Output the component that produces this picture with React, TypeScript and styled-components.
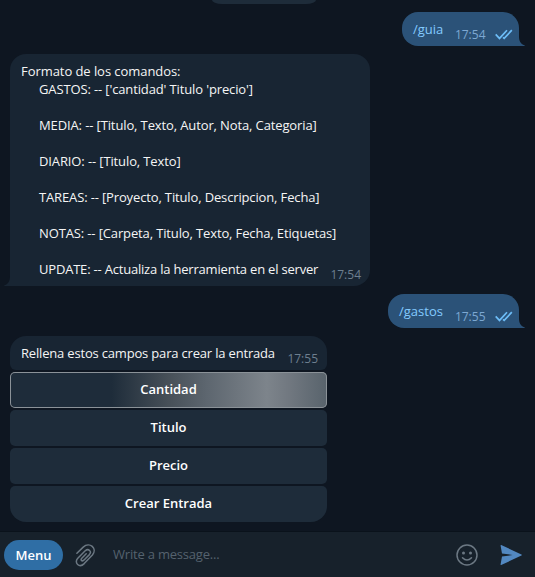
import React from "react";
import styled, { createGlobalStyle, css } from "styled-components";

const GlobalStyle = createGlobalStyle`
  * { box-sizing: border-box; }
  body {
    margin: 0;
    background: #0e1621;
    font-family: "Open Sans", "Noto Sans", sans-serif;
    font-size: 13px;
    line-height: 18px;
    overflow: hidden;
  }
`;

const Window = styled.div`
  width: 535px;
  height: 577px;
  display: flex;
  flex-direction: column;
  background: #0e1621;
`;

const Chat = styled.main`
  flex: 1;
  min-height: 0;
  display: flex;
  flex-direction: column;
  gap: 8px;
  padding: 0 16px 0 10px;
`;

const DatePill = styled.div`
  flex: none;
  width: 104px;
  height: 4px;
  margin-left: 202px;
  border-radius: 0 0 10px 10px / 0 0 4px 4px;
  background: #1e2c3a;
`;

const Bubble = styled.article<{ $out?: boolean; $width: number; $joined?: boolean }>`
  position: relative;
  flex: none;
  align-self: ${(p) => (p.$out ? "flex-end" : "flex-start")};
  display: flex;
  align-items: flex-end;
  justify-content: space-between;
  width: ${(p) => p.$width}px;
  padding: 8px 9px 8px 11px;
  color: #f5f5f5;
  background: #182533;
  border-radius: 16px 16px 16px 0;
  ${(p) =>
    p.$out &&
    css`
      color: #83caff;
      background: #2b5278;
      border-radius: 16px 16px 0 16px;
      padding-right: 6px;
    `}
  ${(p) =>
    p.$joined &&
    css`
      border-radius: 16px 16px 6px 6px;
    `}
`;

const Tail = styled.svg<{ $out?: boolean }>`
  position: absolute;
  bottom: 0;
  width: 6px;
  height: 10px;
  ${(p) =>
    p.$out
      ? css`
          right: -6px;
          fill: #2b5278;
        `
      : css`
          left: -6px;
          fill: #182533;
          transform: scaleX(-1);
        `}
`;

const Text = styled.div`
  white-space: pre;
`;

const Line = styled.div<{ $tracking?: number }>`
  letter-spacing: ${(p) => p.$tracking ?? 0}px;
`;

const Indented = styled.div`
  padding-left: 18px;
  display: grid;
  row-gap: 18px;
`;

const Meta = styled.div<{ $out?: boolean }>`
  flex: none;
  display: flex;
  align-items: center;
  gap: 9.5px;
  height: 18px;
  margin: 0 0 -6px -20px;
  font-size: 12px;
  color: ${(p) => (p.$out ? "#7da8d3" : "#6d7f8f")};
`;

const CheckIcon = styled.svg`
  display: block;
  margin-top: -2px;
  fill: none;
  stroke: #6dbdf7;
  stroke-width: 1.7;
`;

const Keyboard = styled.section`
  flex: none;
  width: 317px;
  margin-top: -6px;
  display: grid;
  grid-auto-rows: 36px;
  row-gap: 2px;
`;

const KeyButton = styled.button<{ $loading?: boolean }>`
  border: 0;
  padding: 0 0 2px;
  border-radius: 5px;
  background: #1e2c3a;
  color: #fff;
  font: 600 13px/18px "Open Sans", "Noto Sans", sans-serif;
  &:last-child {
    border-radius: 5px 5px 16px 16px;
  }
  ${(p) =>
    p.$loading &&
    css`
      box-shadow: inset 0 0 0 1px #8b9298;
      background: linear-gradient(
        90deg,
        #1e2c3a 32%,
        #475058 50%,
        #5d666f 62%,
        #7d848b 81%,
        #717880 88%,
        #58636c 100%
      );
    `}
`;

const Composer = styled.footer`
  flex: none;
  height: 46px;
  border-top: 1px solid #0a121b;
  background: #17212b;
  display: flex;
  align-items: center;
  padding: 0 12px 0 4px;
`;

const MenuButton = styled.button`
  width: 59px;
  height: 30px;
  margin-top: 1px;
  padding: 0;
  border: 0;
  border-radius: 15px;
  background: #2f6ea5;
  color: #fff;
  font: 600 13px/18px "Open Sans", "Noto Sans", sans-serif;
`;

const Icon = styled.svg`
  flex: none;
  display: block;
  fill: none;
  stroke: #6c7883;
  stroke-linecap: round;
  stroke-linejoin: round;
`;

const Clip = styled(Icon)`
  margin: 2px 0 0 12px;
`;

const Smile = styled(Icon)`
  margin-top: 1px;
`;

const Send = styled(Icon)`
  margin: 1px 0 0 22px;
`;

const Placeholder = styled.div`
  flex: 1;
  margin: -1px 0 0 17px;
  color: #55626e;
  letter-spacing: -0.2px;
`;

const BubbleTail = ({ out }: { out?: boolean }) => (
  <Tail $out={out} viewBox="0 0 6 10">
    <path d="M0 0C0 5 1.5 8 5.5 9.2Q6.2 10 5 10H0Z" />
  </Tail>
);

const Checks = () => (
  <CheckIcon width="18" height="11" viewBox="0 0 18 11">
    <path d="M.7 5.4 4.5 9.4 12 1.2M8 8.3 9.2 9.4 16.8 1.2" />
  </CheckIcon>
);

const commands = [
  { text: "GASTOS: -- ['cantidad' Titulo 'precio']", tracking: -0.13 },
  { text: "MEDIA: -- [Titulo, Texto, Autor, Nota, Categoria]", tracking: -0.12 },
  { text: "DIARIO: -- [Titulo, Texto]", tracking: -0.12 },
  { text: "TAREAS: -- [Proyecto, Titulo, Descripcion, Fecha]", tracking: -0.14 },
  { text: "NOTAS: -- [Carpeta, Titulo, Texto, Fecha, Etiquetas]", tracking: -0.13 },
  { text: "UPDATE: -- Actualiza la herramienta en el server", tracking: -0.2 },
];

const keys = ["Cantidad", "Titulo", "Precio", "Crear Entrada"];

const Outgoing = ({ text, time, width }: { text: string; time: string; width: number }) => (
  <Bubble $out $width={width}>
    <Text>{text}</Text>
    <Meta $out>
      <span>{time}</span>
      <Checks />
    </Meta>
    <BubbleTail out />
  </Bubble>
);

export default function App() {
  return (
    <Window>
      <GlobalStyle />
      <Chat>
        <DatePill />
        <Outgoing text="/guia" time="17:54" width={117} />
        <Bubble $width={360}>
          <Text>
            <Line $tracking={-0.06}>Formato de los comandos:</Line>
            <Indented>
              {commands.map((c) => (
                <Line key={c.text} $tracking={c.tracking}>
                  {c.text}
                </Line>
              ))}
            </Indented>
          </Text>
          <Meta>17:54</Meta>
          <BubbleTail />
        </Bubble>
        <Outgoing text="/gastos" time="17:55" width={131} />
        <Bubble $width={317} $joined>
          <Text>
            <Line $tracking={-0.18}>Rellena estos campos para crear la entrada</Line>
          </Text>
          <Meta>17:55</Meta>
        </Bubble>
        <Keyboard>
          {keys.map((k, i) => (
            <KeyButton key={k} $loading={i === 0}>
              {k}
            </KeyButton>
          ))}
        </Keyboard>
      </Chat>
      <Composer>
        <MenuButton>Menu</MenuButton>
        <Clip width="21" height="23" viewBox="0 0 21 23" strokeWidth="1.5">
          <path d="M1.9 9.2 8.2 3.1C14.6-2.6 22.8 4.4 17.4 11L9.2 19.6C4.4 24.4-1.4 18.8 2.8 14.3L10.2 6.8C13.4 4 17.2 7.4 14.4 10.6L8.8 16.2C6.8 17.8 5.2 15.8 6.8 14.2L11.2 9.8" />
        </Clip>
        <Placeholder>Write a message...</Placeholder>
        <Smile width="22" height="22" viewBox="0 0 22 22" strokeWidth="1.5">
          <circle cx="11" cy="11" r="10" />
          <path d="M6.5 13.8Q11 18.4 15.5 13.8" />
          <circle cx="7.5" cy="9" r="1.5" fill="#6c7883" stroke="none" />
          <circle cx="14.5" cy="9" r="1.5" fill="#6c7883" stroke="none" />
        </Smile>
        <Send width="23" height="22" viewBox="0 0 23 22">
          <path
            d="M1.2 1 21.4 10.4Q22.4 11 21.4 11.6L1.2 21Q.5 21.2.6 20.2L2 12.6 12.5 11 2 9.4.6 1.8Q.5.8 1.2 1Z"
            fill="#5288c1"
            stroke="none"
          />
        </Send>
      </Composer>
    </Window>
  );
}
